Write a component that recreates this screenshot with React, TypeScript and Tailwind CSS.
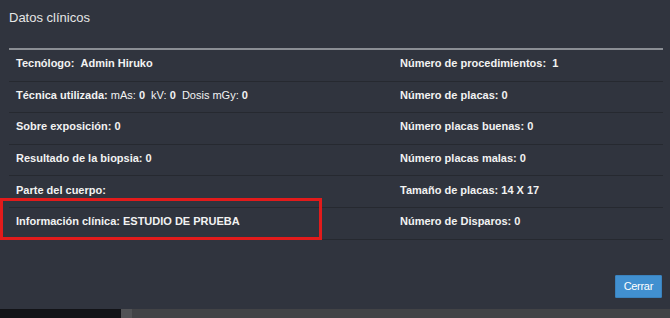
import React from "react";

type Row = { left: React.ReactNode; right: React.ReactNode };

export default function App() {
    const rows: Row[] = [
        {
            left: <><b>Tecnólogo:</b>&nbsp; <b>Admin Hiruko</b></>,
            right: <><b>Número de procedimientos:</b>&nbsp; <b>1</b></>,
        },
        {
            left: (
                <>
                    <b>Técnica utilizada:</b> mAs: <b>0</b>&nbsp; kV: <b>0</b>&nbsp; Dosis mGy: <b>0</b>
                </>
            ),
            right: <b>Número de placas: 0</b>,
        },
        { left: <b>Sobre exposición: 0</b>, right: <b>Número placas buenas: 0</b> },
        { left: <b>Resultado de la biopsia: 0</b>, right: <b>Número placas malas: 0</b> },
        { left: <b>Parte del cuerpo:</b>, right: <b>Tamaño de placas: 14 X 17</b> },
        { left: <b>Información clínica: ESTUDIO DE PRUEBA</b>, right: <b>Número de Disparos: 0</b> },
    ];

    return (
        <div className="w-[670px] h-[318px] flex flex-col bg-[#424346] font-['Liberation_Sans',Arial,sans-serif] overflow-hidden">
            <div className="relative h-[309px] flex flex-col bg-[#30343e] text-[#f2f2f2]">
                <div className="h-[48px] px-[9px] pt-[10px]">
                    <h2 className="text-[13px] leading-[15px] text-[#e6e6e6]">Datos clínicos</h2>
                </div>
                <div className="ml-[9px] w-[654px] h-[2px] bg-[#8b8e94]" />
                <div className="ml-[9px] w-[654px] text-[11px] leading-[13px]">
                    {rows.map((r, i) => (
                        <div key={i} className="grid grid-cols-[384px_1fr] h-[31.6px] border-b border-[#262930]">
                            <div className="pl-[7px] pb-[3px] flex items-center">
                                <span>{r.left}</span>
                            </div>
                            <div className="pl-[7px] pb-[3px] flex items-center">
                                <span>{r.right}</span>
                            </div>
                        </div>
                    ))}
                </div>
                <div className="flex-1 flex justify-end items-end pr-[8px] pb-[11px]">
                    <button className="h-[23px] px-[8px] bg-[#4190d0] text-white text-[11px] tracking-[-0.3px] rounded-[1px] border border-[#3a82bd]">
                        Cerrar
                    </button>
                </div>

                <div className="absolute left-0 top-[198px] w-[322px] h-[42px] border-[3px] border-[#e21b1b]" />
            </div>
            <div className="flex-1 flex">
                <div className="w-[121px] bg-[#121317]" />
                <div className="w-[11px] bg-[#515255]" />
                <div className="flex-1 bg-[#424346]" />
            </div>
        </div>
    );
}
